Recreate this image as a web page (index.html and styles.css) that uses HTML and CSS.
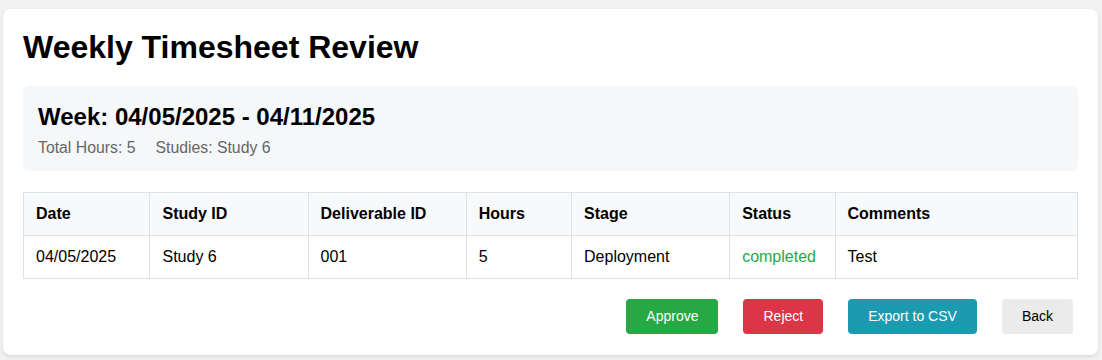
FILE: index.html
```html
<!DOCTYPE html>
<html lang="en">
<head>
    <meta charset="UTF-8">
    <meta name="viewport" content="width=device-width, initial-scale=1.0">
    <title>Weekly Timesheet Review</title>
    <link rel="stylesheet" href="styles.css">
</head>
<body>
<div class="review-card">
    <h1>Weekly Timesheet Review</h1>

    <div class="week-summary">
        <h2>Week: 04/05/2025 - 04/11/2025</h2>
        <div class="summary-stats">
            <span>Total Hours: 5</span>
            <span>Studies: Study 6</span>
        </div>
    </div>

    <table class="entries-table">
        <thead>
            <tr>
                <th class="col-date">Date</th>
                <th class="col-study">Study ID</th>
                <th class="col-deliverable">Deliverable ID</th>
                <th class="col-hours">Hours</th>
                <th class="col-stage">Stage</th>
                <th class="col-status">Status</th>
                <th class="col-comments">Comments</th>
            </tr>
        </thead>
        <tbody>
            <tr>
                <td>04/05/2025</td>
                <td>Study 6</td>
                <td>001</td>
                <td>5</td>
                <td>Deployment</td>
                <td class="status-completed">completed</td>
                <td>Test</td>
            </tr>
        </tbody>
    </table>

    <div class="actions">
        <button class="btn btn-approve">Approve</button>
        <button class="btn btn-reject">Reject</button>
        <button class="btn btn-export">Export to CSV</button>
        <button class="btn btn-back">Back</button>
    </div>
</div>
</body>
</html>
```

FILE: styles.css
```css
:root {
    --border-color: #dee2e6;
    --light-bg: #f6f7f9;
    --success: #28a745;
    --danger: #dc3545;
    --info: #1b9ab0;
}

body {
    font-family: Arial, 'Liberation Sans', Helvetica, sans-serif;
    margin: 0;
    padding: 9px 4px 5px 3px;
    background-color: #f2f2f2;
    color: #000;
}

.review-card {
    background-color: white;
    border-radius: 8px;
    padding: 20px 20px 21px;
    box-shadow: 0 2px 4px rgba(0, 0, 0, 0.1);
}

h1 {
    font-size: 32px;
    margin: 0 0 20px;
}

.week-summary {
    background-color: var(--light-bg);
    border-radius: 6px;
    padding: 17px 15px 14px;
    margin-bottom: 21px;
}

.week-summary h2 {
    font-size: 24px;
    margin: 0 0 8px;
}

.summary-stats {
    display: flex;
    gap: 20px;
    font-size: 15.8px;
    color: #666;
}

.entries-table {
    width: 100%;
    border-collapse: collapse;
    font-size: 16px;
}

.entries-table th,
.entries-table td {
    border: 1px solid var(--border-color);
    padding: 12px;
    text-align: left;
}

.entries-table th {
    background-color: #f8f9fa;
    font-weight: bold;
}

.col-date { width: 12%; }
.col-study { width: 15%; }
.col-deliverable { width: 15%; }
.col-hours { width: 10%; }
.col-stage { width: 15%; }
.col-status { width: 10%; }
.col-comments { width: 23%; }

.status-completed {
    color: var(--success);
}

.actions {
    display: flex;
    justify-content: flex-end;
    gap: 15px;
    margin-top: 20px;
}

.btn {
    font-family: inherit;
    font-size: 14px;
    line-height: 15px;
    padding: 10px 20px;
    margin: 0 5px;
    border: none;
    border-radius: 4px;
    color: white;
    cursor: pointer;
}

.btn-approve { background-color: var(--success); }
.btn-reject { background-color: var(--danger); }
.btn-export { background-color: var(--info); }

.btn-back {
    background-color: #ebebeb;
    color: #000;
}
```
